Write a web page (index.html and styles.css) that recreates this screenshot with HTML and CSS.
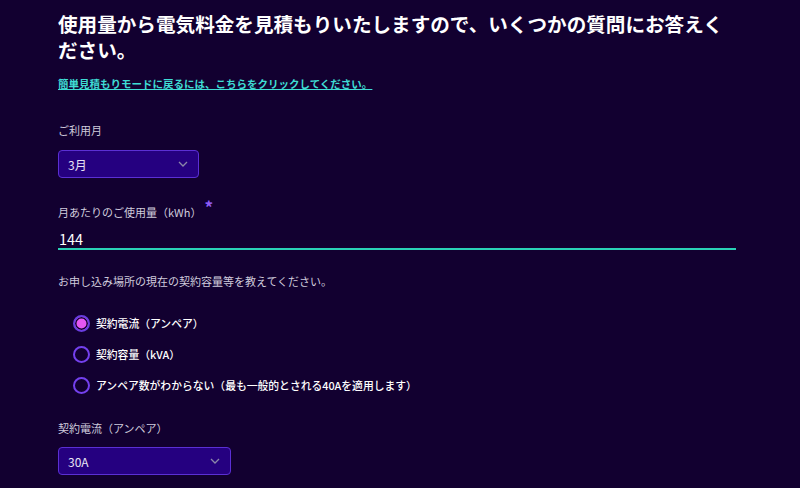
FILE: index.html
```html
<!DOCTYPE html>
<html lang="ja">
<head>
  <meta charset="UTF-8">
  <meta name="viewport" content="width=device-width, initial-scale=1.0">
  <title>電気料金の見積もり</title>
  <link rel="stylesheet" href="styles.css">
</head>
<body>

  <div id="estimateForm">
    <h1>使用量から電気料金を見積もりいたしますので、いくつかの質問にお答えください。</h1>
    <a id="backLink" href="#">簡単見積もりモードに戻るには、こちらをクリックしてください。</a>

    <div class="fieldLabel" id="monthLabel">ご利用月</div>
    <div class="selectBox" id="monthSelect">
      <span>3月</span>
      <svg class="chevron" width="10" height="6" viewBox="0 0 10 6"><path d="M1 1l4 4 4-4" fill="none" stroke="#8b87a8" stroke-width="1.3"/></svg>
    </div>

    <div class="fieldLabel" id="usageLabel">月あたりのご使用量（kWh）<span class="required">*</span></div>
    <div id="usageInput">144</div>

    <div class="fieldLabel" id="capacityQuestion">お申し込み場所の現在の契約容量等を教えてください。</div>
    <div id="radioList">
      <label class="radioRow"><span class="radio checked"></span>契約電流（アンペア）</label>
      <label class="radioRow"><span class="radio"></span>契約容量（kVA）</label>
      <label class="radioRow"><span class="radio"></span>アンペア数がわからない（最も一般的とされる40Aを適用します）</label>
    </div>

    <div class="fieldLabel" id="ampLabel">契約電流（アンペア）</div>
    <div class="selectBox" id="ampSelect">
      <span>30A</span>
      <svg class="chevron" width="10" height="6" viewBox="0 0 10 6"><path d="M1 1l4 4 4-4" fill="none" stroke="#8b87a8" stroke-width="1.3"/></svg>
    </div>
  </div>

</body>
</html>
```

FILE: styles.css
```css
body {
  background-color: #120030;
  color: #ffffff;
  font-family: "Noto Sans CJK JP", "Noto Sans", sans-serif;
  margin: 0;
  padding: 0;
}

#estimateForm {
  padding: 11px 64px 0 58px;
}

h1 {
  font-size: 19.6px;
  line-height: 26px;
  font-weight: 700;
  margin: 0;
  color: #ffffff;
}

#backLink {
  display: block;
  margin-top: 14px;
  font-size: 10.5px;
  line-height: 14px;
  font-weight: 700;
  color: #3fdcd4;
  text-decoration: underline;
}

.fieldLabel {
  font-size: 11px;
  line-height: 16px;
  color: #cfcbdc;
}

#monthLabel {
  margin-top: 31px;
}

.selectBox {
  box-sizing: border-box;
  height: 28px;
  margin-top: 12px;
  padding: 0 10px 0 9px;
  display: flex;
  align-items: center;
  justify-content: space-between;
  background-color: #250080;
  border: 1px solid #5b2fd4;
  border-radius: 4px;
  font-size: 12px;
  color: #e8e4f4;
}

#monthSelect {
  width: 141px;
}

#ampSelect {
  width: 173px;
  margin-top: 11px;
}

#usageLabel {
  margin-top: 26px;
}

.required {
  color: #8f5cf7;
  font-size: 17px;
  line-height: 10px;
  font-weight: 700;
  margin-left: 3px;
  position: relative;
  top: -3px;
}

#usageInput {
  margin-top: 10px;
  height: 18px;
  line-height: 18px;
  font-size: 14.5px;
  padding-left: 1px;
  border-bottom: 2px solid #2ad1b6;
  color: #ffffff;
}

#capacityQuestion {
  margin-top: 23px;
}

#radioList {
  margin-top: 24px;
  display: flex;
  flex-direction: column;
  gap: 11px;
}

.radioRow {
  display: flex;
  align-items: center;
  height: 20px;
  font-size: 10.8px;
  font-weight: 500;
  color: #ffffff;
}

.radio {
  box-sizing: border-box;
  width: 17px;
  height: 17px;
  margin-left: 15px;
  margin-right: 6px;
  border: 2px solid #7440ee;
  border-radius: 50%;
}

.radio.checked {
  border-color: #6a3de0;
  background-color: #e557f2;
  box-shadow: inset 0 0 0 1.5px #120030;
}

#ampLabel {
  margin-top: 25px;
}
```
